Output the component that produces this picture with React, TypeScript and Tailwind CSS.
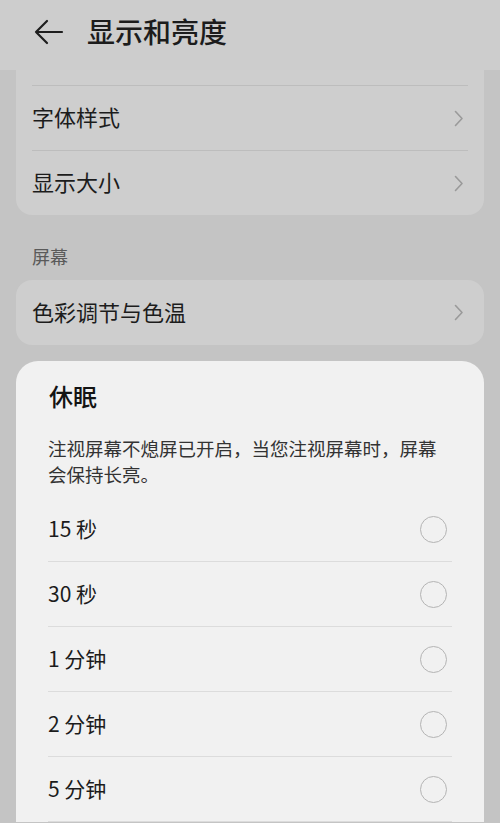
import React from "react";

const font = { fontFamily: '"Noto Sans CJK SC", "Noto Sans", sans-serif' };

function Chevron() {
  return (
    <svg className="mr-[4px]" width="10" height="17" viewBox="0 0 10 17" fill="none">
      <path d="M1.5 1.5 L8 8.5 L1.5 15.5" stroke="#9a9a9a" strokeWidth="1.6" strokeLinecap="round" strokeLinejoin="round" />
    </svg>
  );
}

function Radio() {
  return <div className="w-[27px] h-[27px] rounded-full border-[1.5px] border-[#b4b4b4]" />;
}

function Row({ label }: { label: string }) {
  return (
    <div className="h-[65px] flex items-center justify-between border-t border-[#bdbdbd]">
      <span className="text-[22px] leading-none text-[#1c1c1c] mb-[4px]">{label}</span>
      <Chevron />
    </div>
  );
}

export default function App() {
  const opts = ["15 秒", "30 秒", "1 分钟", "2 分钟", "5 分钟"];
  return (
    <div className="w-[500px] h-[823px] bg-[#c4c4c4] overflow-hidden" style={font}>
      <div className="h-[70px] bg-[#cdcdcd] flex items-center pb-[6px]">
        <svg className="ml-[34px]" width="30" height="26" viewBox="0 0 30 26" fill="none">
          <path d="M13 2 L2 13 L13 24 M2 13 H28" stroke="#1e1e1e" strokeWidth="2.2" strokeLinecap="round" strokeLinejoin="round" />
        </svg>
        <span className="ml-[23px] text-[28px] font-medium text-[#1c1c1c] leading-none mb-[2px]">显示和亮度</span>
      </div>
      <div className="mx-4 bg-[#cecece] rounded-b-[16px] px-4 pt-[15px]">
        <Row label="字体样式" />
        <Row label="显示大小" />
      </div>
      <div className="px-8 pt-[29px] pb-[12px] text-[18px] leading-[24px] text-[#5a5a5a]">屏幕</div>
      <div className="mx-4 bg-[#cecece] rounded-[16px] px-4 h-[65px] flex items-center justify-between">
        <span className="text-[22px] leading-none text-[#1c1c1c] mb-[4px]">色彩调节与色温</span>
        <Chevron />
      </div>
      <div className="mx-4 mt-[16px] bg-[#f1f1f1] rounded-t-[22px] px-8 pt-[20px]">
        <div className="text-[24px] leading-[30px] font-medium text-[#141414] pl-[1px]">休眠</div>
        <div className="mt-[24px] text-[18.5px] leading-[26px] text-[#333333]">
          注视屏幕不熄屏已开启，当您注视屏幕时，屏幕会保持长亮。
        </div>
        <div className="mt-[10px]">
          {opts.map((o) => (
            <div key={o} className="h-[65px] flex items-center justify-between border-b border-[#dcdcdc]">
              <span className="text-[21px] leading-none text-[#1c1c1c] mb-[2px]">{o}</span>
              <div className="mr-[5px]">
                <Radio />
              </div>
            </div>
          ))}
        </div>
      </div>
    </div>
  );
}
